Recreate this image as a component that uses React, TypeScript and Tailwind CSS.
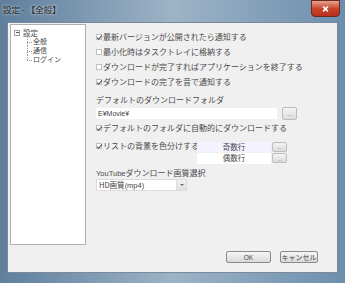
import React from "react";

const font = { fontFamily: '"Noto Sans CJK JP", "Noto Sans", sans-serif' };
const latin = { fontFamily: '"Liberation Sans", sans-serif' };

function Check({ checked }: { checked: boolean }) {
  return (
    <span className="relative inline-block w-[6px] h-[6px] border border-[#c0c0c0] bg-white mr-[1px] shrink-0">
      {checked && (
        <svg viewBox="0 0 8 8" className="absolute left-[-1px] top-[-1px] w-[7px] h-[7px]">
          <path d="M1.3 4.2 L3.1 6 L6.8 1.6" stroke="#555" strokeWidth="1.3" fill="none" />
        </svg>
      )}
    </span>
  );
}

function CheckRow({ checked, label, h = "h-[15px]" }: { checked: boolean; label: string; h?: string }) {
  return (
    <div className={`flex items-center ${h}`}>
      <Check checked={checked} />
      <span className="block text-[8px] leading-[10px] text-[#4a4a4a] whitespace-nowrap">{label}</span>
    </div>
  );
}

function DotBtn({ cls }: { cls: string }) {
  return (
    <div className={`${cls} border border-[#bcbcbc] rounded-[2px] bg-gradient-to-b from-[#f4f4f4] to-[#dcdcdc] flex items-center justify-center`}>
      <span className="block text-[5px] leading-[5px] text-[#999]">...</span>
    </div>
  );
}

export default function App() {
  return (
    <div
      className="w-[345px] h-[283px] flex flex-col overflow-hidden bg-gradient-to-r from-[#5f7f9d] via-[#9db3c6] to-[#6d8fae]"
      style={font}
    >
      {/* title bar */}
      <div className="h-[22px] flex items-start relative">
        <span className="block ml-[3px] mt-[4px] text-[8.5px] leading-[11px] text-[#222] [text-shadow:0_0_3px_rgba(255,255,255,0.9)] whitespace-nowrap">
          設定 - 【全般】
        </span>
        <div className="absolute left-[311px] top-0 w-[29px] h-[17px] rounded-b-[4px] border border-[#6b2a20] bg-gradient-to-b from-[#e8a090] via-[#c8452c] to-[#b8301c] flex items-center justify-center">
          <svg viewBox="0 0 10 10" className="w-[9px] h-[8px]">
            <path d="M2 2 L8 8 M8 2 L2 8" stroke="#fff" strokeWidth="2" />
          </svg>
        </div>
      </div>
      {/* client */}
      <div className="flex-1 flex px-[7px] pb-[10px]">
        <div className="flex-1 bg-[#f0f0f0] border border-[#7a8a9a] flex">
          {/* tree */}
          <div className="ml-[2px] mt-[1px] w-[76px] h-[221px] bg-white border border-[#b0b0b0] pt-[3px]">
            <div className="flex items-center h-[9px] ml-[3px]">
              <span className="w-[6px] h-[6px] border border-[#a0a0a0] flex items-center justify-center mr-[3px]">
                <span className="w-[3px] h-px bg-[#555]" />
              </span>
              <span className="block text-[7.5px] leading-[8px] text-[#4a4a4a]">設定</span>
            </div>
            {["全般", "通信", "ログイン"].map((t, i) => (
              <div key={t} className="flex items-center h-[9px] ml-[16px]">
                <span className="relative w-[6px] h-full">
                  <span className={`absolute left-0 top-0 w-px border-l border-dotted border-[#999] ${i === 2 ? "h-1/2" : "h-full"}`} />
                  <span className="absolute left-0 top-1/2 w-[5px] border-t border-dotted border-[#999]" />
                </span>
                <span className="block text-[7px] leading-[7px] text-[#4a4a4a] whitespace-nowrap">{t}</span>
              </div>
            ))}
          </div>
          {/* right */}
          <div className="flex-1 flex flex-col pl-[10px]">
            <div className="mt-[6px] flex flex-col">
              <CheckRow checked label="最新バージョンが公開されたら通知する" />
              <CheckRow checked={false} label="最小化時はタスクトレイに格納する" />
              <CheckRow checked={false} label="ダウンロードが完了すればアプリケーションを終了する" />
              <CheckRow checked label="ダウンロードの完了を音で通知する" />
            </div>
            <div className="mt-[5px] h-[12px] flex items-center">
              <span className="block text-[8px] leading-[10px] text-[#4a4a4a] whitespace-nowrap">デフォルトのダウンロードフォルダ</span>
            </div>
            <div className="mt-[1px] flex items-center h-[13px]">
              <div className="w-[181px] h-[11px] bg-white flex items-center pl-[2px]">
                <span className="block text-[7px] leading-[8px] text-[#444]" style={latin}>
                  E¥Movie¥
                </span>
              </div>
              <DotBtn cls="ml-[5px] w-[15px] h-[13px]" />
            </div>
            <div className="mt-[2px]">
              <CheckRow checked label="デフォルトのフォルダに自動的にダウンロードする" h="h-[12px]" />
            </div>
            <div className="mt-[7px] flex items-start">
              <div className="w-[101px] h-[10px] flex items-center">
                <Check checked />
                <span className="block text-[8px] leading-[10px] text-[#4a4a4a] whitespace-nowrap">リストの背景を色分けする</span>
              </div>
              <div className="flex flex-col">
                <div className="flex items-center h-[11px]">
                  <div className="w-[74px] h-[10px] bg-[#f4f2ff] flex items-center justify-center">
                    <span className="block text-[7.5px] leading-[8px] text-[#4a4a4a]">奇数行</span>
                  </div>
                  <DotBtn cls="ml-[1px] w-[15px] h-[10px]" />
                </div>
                <div className="flex items-center h-[12px]">
                  <div className="w-[74px] h-[11px] bg-white flex items-center justify-center">
                    <span className="block text-[7.5px] leading-[8px] text-[#4a4a4a]">偶数行</span>
                  </div>
                  <DotBtn cls="ml-[1px] w-[15px] h-[10px]" />
                </div>
              </div>
            </div>
            <div className="mt-[4px] h-[10px] flex items-center">
              <span className="block text-[8px] leading-[10px] text-[#4a4a4a] whitespace-nowrap">
                <span style={latin} className="text-[7.5px]">YouTube</span>ダウンロード画質選択
              </span>
            </div>
            <div className="mt-[1px] w-[91px] h-[12px] bg-white border border-[#dcdcdc] flex items-center">
              <span className="block flex-1 pl-[2px] text-[7.5px] leading-[8px] text-[#444] whitespace-nowrap">
                HD画質<span style={latin}>(mp4)</span>
              </span>
              <div className="w-[10px] h-full bg-gradient-to-b from-[#f2f2f2] to-[#e0e0e0] border-l border-[#dcdcdc] flex items-center justify-center">
                <span className="w-0 h-0 border-l-[2px] border-r-[2px] border-t-[2px] border-l-transparent border-r-transparent border-t-[#666]" />
              </div>
            </div>
            <div className="flex-1" />
            <div className="flex justify-end mb-[9px] mr-[19px] gap-[9px]">
              <div className="w-[45px] h-[12px] border border-[#8a8a8a] rounded-[2px] bg-gradient-to-b from-[#f6f6f6] to-[#dadada] flex items-center justify-center">
                <span className="block text-[6.5px] leading-[7px] text-[#444]" style={latin}>OK</span>
              </div>
              <div className="w-[38px] h-[12px] border border-[#8a8a8a] rounded-[2px] bg-gradient-to-b from-[#f6f6f6] to-[#dadada] flex items-center justify-center">
                <span className="block text-[7px] leading-[8px] text-[#444] whitespace-nowrap">キャンセル</span>
              </div>
            </div>
          </div>
        </div>
      </div>
    </div>
  );
}
